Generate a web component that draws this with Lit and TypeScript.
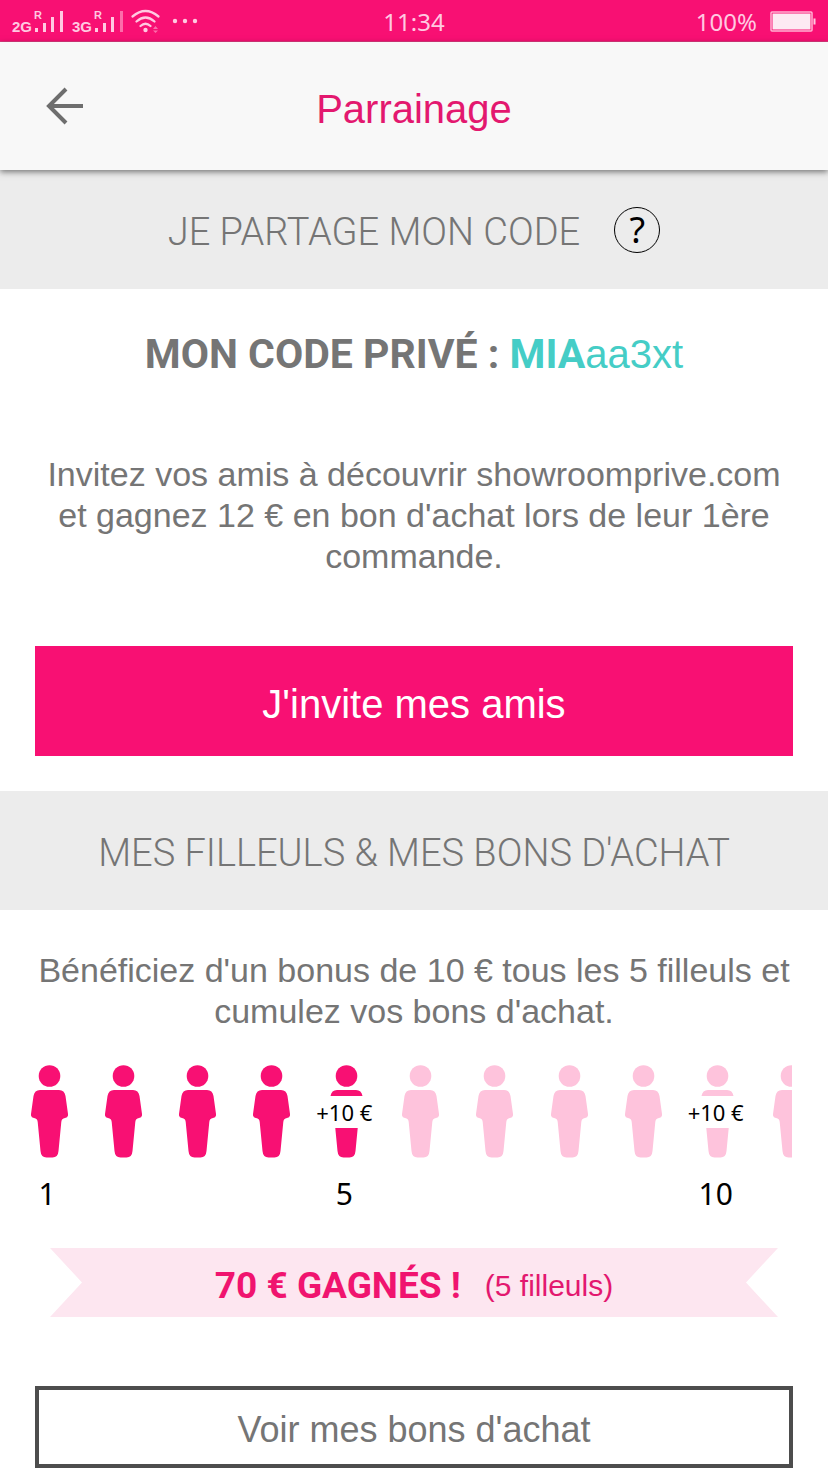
import { LitElement, html, css, svg, nothing } from "lit";
import { customElement, property, state } from "lit/decorators.js";
import { classMap } from "lit/directives/class-map.js";

@customElement("status-bar")
class StatusBar extends LitElement {
  static styles = css`
    :host {
      display: grid;
      grid-template-columns: 1fr auto 1fr;
      align-items: center;
      height: 42px;
      box-sizing: border-box;
      padding: 2px 12px 0;
      background: #f81073;
      color: #ffc9e1;
      font: 400 24px/28px "Noto Sans", sans-serif;
      border-bottom: 1px solid #e0387f;
    }
    .left {
      display: flex;
    }
    .right {
      display: flex;
      align-items: center;
      justify-content: flex-end;
      gap: 13px;
    }
    .net {
      font: 700 15px "Liberation Sans", sans-serif;
    }
    .roam {
      font: 700 11px "Liberation Sans", sans-serif;
    }
  `;

  private signal(x: number, label: string, weak: boolean) {
    return svg`<g transform="translate(${x} 0)" fill="currentColor">
      <text class="net" x="0" y="30">${label}</text>
      <text class="roam" x="22" y="17">R</text>
      <rect x="23" y="26" width="3" height="4"/>
      <rect x="31" y="21" width="3" height="9"/>
      <rect x="39" y="15" width="3" height="15"/>
      <rect x="48" y="9" width="3" height="21" opacity=${weak ? 0.5 : 1}/>
    </g>`;
  }

  render() {
    return html`
      <div class="left">
        <svg width="190" height="39" viewBox="0 0 190 39">
          ${this.signal(0, "2G", false)} ${this.signal(60, "3G", true)}
          <g fill="none" stroke="currentColor" stroke-width="2.3" stroke-linecap="round">
            <path d="M120.5 14.5Q133.5 3.5 146.5 14.5M124.500 19.5Q133.500 11.5 142.500 19.5M128.500 24Q133.500 19.5 138.500 24" />
          </g>
          <circle cx="133.500" cy="28" r="2.2" fill="currentColor" />
          <path d="M141 27l2.500-3 2.500 3zM141 28.500h5l-2.500 2.500z" fill="currentColor" opacity="0.5" />
          <g fill="currentColor">
            <circle cx="163" cy="19" r="2.200" /><circle cx="173" cy="19" r="2.200" /><circle cx="183" cy="19" r="2.200" />
          </g>
        </svg>
      </div>
      <time>11:34</time>
      <div class="right">
        <span>100%</span>
        <svg width="46" height="22" viewBox="0 0 46 22" aria-label="Batterie pleine">
          <rect x="1" y="1" width="41" height="19" rx="1" fill="none" stroke="#ffb3d3" stroke-width="1.500" />
          <rect x="2.500" y="2.500" width="38" height="16" fill="#fdeaf3" />
          <rect x="43.500" y="7.500" width="2" height="6" fill="#ffc9e1" />
        </svg>
      </div>
    `;
  }
}

@customElement("referral-person")
class ReferralPerson extends LitElement {
  @property({ type: Boolean }) active = false;
  @property({ type: Number }) rank = 0;
  @property() bonus = "";

  static styles = css`
    :host {
      display: flex;
      flex-direction: column;
      align-items: center;
    }
    .figure {
      display: grid;
      grid-template-columns: 74px;
      place-items: center;
      height: 93px;
    }
    .shape,
    .bonus {
      grid-area: 1 / 1;
    }
    .shape {
      display: block;
      fill: #fec3dc;
    }
    .shape.active {
      fill: #f81073;
    }
    .bonus {
      background: #fff;
      font-size: 22px;
      line-height: 32px;
      white-space: nowrap;
      margin-right: 4px;
    }
    .rank {
      margin: 18px 4px 0 0;
      font-size: 30px;
      line-height: 36px;
    }
  `;

  render() {
    return html`
      <div class="figure">
        <svg class=${classMap({ shape: true, active: this.active })} width="37" height="93" viewBox="0 0 37 93">
          <circle cx="18.500" cy="11" r="10.800" />
          <path
            d="M9 25H28Q33.500 25 34.500 31L37 49Q37.500 52.500 34 53Q30.500 53.500 30.300 57L27.500 86Q27 92.500 21.500 92.500H15.500Q10 92.500 9.500 86L6.700 57Q6.500 53.500 3 53Q-.5 52.500 0 49L2.500 31Q3.500 25 9 25Z"
          />
        </svg>
        ${this.bonus ? html`<span class="bonus">${this.bonus}</span>` : nothing}
      </div>
      ${this.rank ? html`<span class="rank">${this.rank}</span>` : nothing}
    `;
  }
}

@customElement("app-root")
class AppRoot extends LitElement {
  @state() private referrals = 5;

  static styles = css`
    :host {
      display: block;
      background: #fff;
      color: #757575;
      font-family: "Liberation Sans", Arial, sans-serif;
      font-size: 34px;
      line-height: 41px;
      text-align: center;
    }
    * {
      box-sizing: border-box;
    }
    h1,
    h2,
    p {
      margin: 0;
      font-weight: inherit;
    }
    button {
      font: inherit;
      border: 0;
      border-radius: 0;
      background: none;
      padding: 0;
      color: inherit;
    }
    .topbar {
      position: relative;
      display: grid;
      grid-template-columns: 48px 1fr 48px;
      align-items: center;
      height: 128px;
      padding: 0 40px;
      background: #f8f8f8;
      box-shadow: 0 2px 6px rgba(0, 0, 0, 0.5);
    }
    .back {
      display: grid;
      place-items: center;
      height: 48px;
    }
    h1 {
      font-size: 40px;
      line-height: 52px;
      padding-top: 6px;
      color: #e3186f;
    }
    .band {
      display: flex;
      align-items: center;
      justify-content: center;
      gap: 34px;
      height: 119px;
      background: #ececec;
    }
    h2 {
      font-family: Roboto, sans-serif;
      font-weight: 350;
      font-size: 38px;
      line-height: 48px;
      padding-top: 4px;
    }
    .help {
      width: 46px;
      height: 46px;
      border: 1px solid #000;
      border-radius: 50%;
      color: #000;
      font: 400 36px/42px "Noto Sans", sans-serif;
    }
    .code {
      padding: 40px 0 75px;
      font-size: 40px;
      line-height: 50px;
    }
    .code b {
      font-family: Roboto, sans-serif;
      font-size: 41px;
      font-weight: 700;
    }
    .code output {
      color: #45cdc6;
    }
    .pitch {
      padding: 0 40px;
    }
    .invite {
      display: block;
      width: calc(100% - 70px);
      height: 110px;
      margin: 69px 35px 35px;
      background: #f81073;
      color: #fff;
      font-size: 40px;
      padding-top: 6px;
    }
    .bonus-text {
      padding: 40px 36px 0;
    }
    .people {
      display: flex;
      overflow: hidden;
      margin: 33px 36px 0 12px;
      height: 150px;
      color: #000;
      font-family: "Noto Sans", sans-serif;
      font-weight: 400;
    }
    .people referral-person {
      flex: 0 0 calc(100% / 10.5);
    }
    .ribbon {
      display: flex;
      align-items: center;
      justify-content: center;
      gap: 24px;
      height: 69px;
      margin: 33px 50px 69px;
      padding-top: 6px;
      background: #fde6f0;
      color: #e3186f;
      clip-path: polygon(0 0, 100% 0, calc(100% - 32px) 50%, 100% 100%, 0 100%, 32px 50%);
      font-size: 30px;
    }
    .ribbon strong {
      font-family: Roboto, sans-serif;
      font-size: 37px;
      font-weight: 700;
      color: #f0146f;
    }
    .vouchers {
      display: block;
      width: calc(100% - 70px);
      height: 82px;
      margin: 0 35px 4px;
      border: 4px solid #4d4d4d;
      font-size: 36px;
      padding-top: 4px;
    }
  `;

  render() {
    const people = Array.from({ length: 11 }, (_, i) => i + 1);
    return html`
      <status-bar></status-bar>
      <header class="topbar">
        <button class="back" aria-label="Retour">
          <svg width="38" height="38" viewBox="0 0 38 38" fill="none" stroke="#6e6e6e" stroke-width="4">
            <path d="M38 19H4M21 2L4 19l17 17" />
          </svg>
        </button>
        <h1>Parrainage</h1>
      </header>
      <main>
        <section>
          <div class="band">
            <h2>JE PARTAGE MON CODE</h2>
            <button class="help" aria-label="Aide">?</button>
          </div>
          <p class="code"><b>MON CODE PRIVÉ : </b><output><b>MIA</b>aa3xt</output></p>
          <p class="pitch">
            Invitez vos amis à découvrir showroomprive.com et gagnez 12 € en bon d'achat lors de leur 1ère commande.
          </p>
          <button class="invite">J'invite mes amis</button>
        </section>
        <section>
          <div class="band"><h2>MES FILLEULS &amp; MES BONS D'ACHAT</h2></div>
          <p class="bonus-text">
            Bénéficiez d'un bonus de 10 € tous les 5 filleuls et cumulez vos bons d'achat.
          </p>
          <div class="people">
            ${people.map(
              (n) => html`<referral-person
                .active=${n <= this.referrals}
                .rank=${n === 1 || n % 5 === 0 ? n : 0}
                .bonus=${n % 5 === 0 ? "+10 €" : ""}
              ></referral-person>`
            )}
          </div>
          <p class="ribbon"><strong>70 € GAGNÉS !</strong><span>(${this.referrals} filleuls)</span></p>
          <button class="vouchers">Voir mes bons d'achat</button>
        </section>
      </main>
    `;
  }
}
